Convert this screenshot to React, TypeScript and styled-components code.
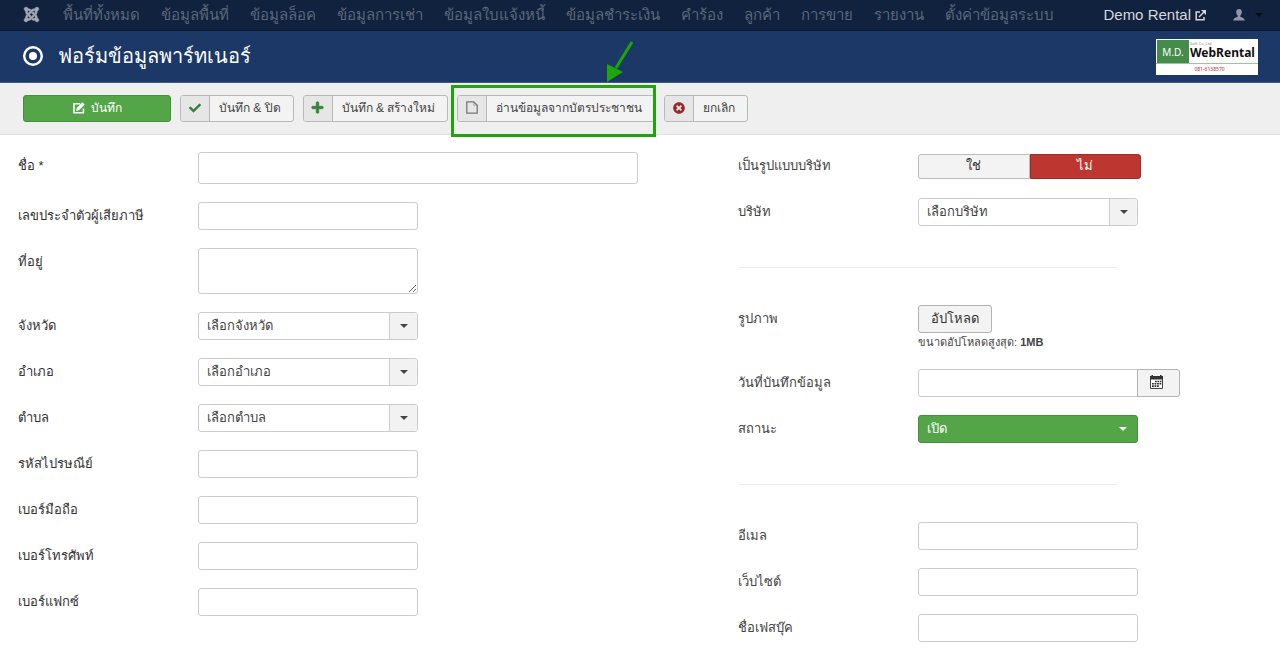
import React from "react";
import styled, { createGlobalStyle, css } from "styled-components";
import { FaJoomla, FaCheck, FaPlus, FaTimesCircle } from "react-icons/fa";

const fontStack = `"Liberation Sans", "Noto Sans", sans-serif`;

const GlobalStyle = createGlobalStyle`
  *, *::before, *::after { box-sizing: border-box; }
  body {
    margin: 0;
    background: #fff;
    color: #333;
    font: 13px/18px ${fontStack};
  }
  button, input, select, textarea { font: inherit; color: inherit; margin: 0; }
`;

const NavBar = styled.nav`
  display: flex;
  align-items: center;
  height: 31px;
  padding: 0 17px 0 23px;
  background: #10223e;
  border-bottom: 1px solid #0c1a2f;
  color: #d0d3d8;
  font-size: 15px;
  white-space: nowrap;
`;

const BrandLink = styled.a`
  display: flex;
  margin-right: 13px;
  padding-bottom: 2px;
  color: #a3a9b4;
`;

const MenuList = styled.ul`
  display: flex;
  flex: 1;
  gap: 1px;
  margin: 0;
  padding: 0;
  list-style: none;
`;

const MenuLink = styled.a`
  display: block;
  padding: 0 10px;
  color: #5c677b;
  font-size: 15px;
  line-height: 30px;
  text-decoration: none;
`;

const SiteLink = styled.a`
  display: flex;
  align-items: center;
  gap: 4px;
  margin-right: 27px;
  color: #d5d8dd;
  text-decoration: none;
`;

const UserButton = styled.button`
  display: flex;
  align-items: center;
  gap: 10px;
  padding: 0;
  border: 0;
  background: none;
  color: #9299a6;
`;

const Caret = styled.span`
  width: 0;
  height: 0;
  border: 4px solid transparent;
  border-top-color: currentColor;
  border-bottom: 0;
`;

const NavCaret = styled(Caret)`
  color: #060d18;
`;

const Header = styled.header`
  display: flex;
  align-items: center;
  justify-content: space-between;
  height: 52px;
  padding: 0 22px;
  background: #1c3867;
  border-bottom: 1px solid #44597f;
`;

const Title = styled.h1`
  display: flex;
  align-items: center;
  gap: 14px;
  margin: 0;
  padding-bottom: 2px;
  color: #fff;
  font-size: 20px;
  font-weight: normal;
  line-height: 36px;
`;

const Logo = styled.div`
  display: grid;
  grid-template-columns: 33px 1fr;
  grid-template-rows: 24px 1fr;
  width: 102px;
  height: 36px;
  background: #fff;
  font-family: "Noto Sans", sans-serif;
`;

const LogoMark = styled.div`
  margin: 1px 0 0 1px;
  background: #458b49;
  color: #fff;
  font-size: 10px;
  line-height: 24px;
  text-align: center;
`;

const LogoName = styled.div`
  display: flex;
  flex-direction: column;
  padding: 3px 0 0 1px;
  color: #111;
  font-size: 12px;
  font-weight: 700;
  line-height: 14px;
`;

const LogoOver = styled.span`
  color: #888;
  font-size: 4px;
  font-weight: 400;
  line-height: 4px;
`;

const LogoPhone = styled.div`
  grid-column: 1 / -1;
  padding-left: 5px;
  border-top: 1px solid #9cc49e;
  color: #b02a30;
  font-size: 5px;
  line-height: 11px;
  text-align: center;
`;

const Toolbar = styled.div`
  display: flex;
  align-items: flex-start;
  gap: 9px;
  height: 52px;
  padding: 12px 23px 0;
  background: #efefef;
  border-bottom: 1px solid #dfdfdf;
`;

const ToolButton = styled.button<{ $primary?: boolean }>`
  display: flex;
  align-items: stretch;
  height: 27px;
  padding: 0;
  border: 1px solid #b9b9b9;
  border-radius: 3px;
  background: #f3f3f3;
  color: #444;
  font-size: 12px;
  line-height: 25px;
  white-space: nowrap;
  ${(p) =>
    p.$primary &&
    css`
      justify-content: center;
      align-items: center;
      gap: 6px;
      width: 148px;
      border-color: #468f3e;
      background: #54a548;
      color: #fff;
    `}
`;

const ToolIcon = styled.span<{ $color: string }>`
  display: flex;
  align-items: center;
  justify-content: center;
  width: 29px;
  padding-bottom: 2px;
  border-right: 1px solid #b9b9b9;
  border-radius: 2px 0 0 2px;
  background: #e6e6e6;
  color: ${(p) => p.$color};
`;

const ToolLabel = styled.span`
  padding: 0 12px 0 9px;
`;

const Callout = styled.div`
  position: relative;
`;

const CalloutFrame = styled.span`
  position: absolute;
  inset: -10px -1px -15px -6px;
  border: 3px solid #1ea508;
  pointer-events: none;
`;

const CalloutArrow = styled.svg`
  position: absolute;
  left: 148px;
  top: -55px;
  pointer-events: none;
`;

const FormGrid = styled.form`
  display: grid;
  grid-template-columns: 702fr 524fr;
  gap: 18px;
  padding: 17px 18px 0;
`;

const Column = styled.div<{ $color: string }>`
  display: flex;
  flex-direction: column;
  gap: 18px;
  min-width: 0;
  color: ${(p) => p.$color};
`;

const Row = styled.div`
  display: grid;
  grid-template-columns: 180px minmax(0, 1fr);
  align-items: start;
  min-height: 28px;
`;

const Label = styled.label`
  padding-top: 5px;
`;

const fieldBox = css`
  display: block;
  border: 1px solid #ccc;
  border-radius: 3px;
  background: #fff;
  outline: 0;
`;

const TextInput = styled.input<{ $large?: boolean }>`
  ${fieldBox}
  width: ${(p) => (p.$large ? 440 : 220)}px;
  max-width: 100%;
  height: ${(p) => (p.$large ? 32 : 28)}px;
  padding: 4px 6px;
`;

const TextArea = styled.textarea`
  ${fieldBox}
  width: 220px;
  height: 46px;
  padding: 4px 6px;
  resize: vertical;
`;

const SelectBox = styled.div<{ $success?: boolean }>`
  position: relative;
  width: 220px;
  height: 28px;
  color: ${(p) => (p.$success ? "#fff" : "#444")};
`;

const Select = styled.select<{ $success?: boolean }>`
  ${fieldBox}
  width: 100%;
  height: 28px;
  padding: 0 30px 0 8px;
  appearance: none;
  ${(p) =>
    p.$success &&
    css`
      border-color: #468f3e;
      background: #54a548;
    `}
`;

const SelectArrow = styled.span<{ $plain?: boolean }>`
  position: absolute;
  top: 1px;
  right: 1px;
  bottom: 1px;
  display: flex;
  align-items: center;
  justify-content: center;
  width: 28px;
  border-left: ${(p) => (p.$plain ? "0" : "1px solid #ccc")};
  border-radius: 0 2px 2px 0;
  background: ${(p) => (p.$plain ? "none" : "#f2f2f2")};
  pointer-events: none;
`;

const Toggle = styled.div`
  display: flex;
  width: 223px;
  margin-top: 2px;
`;

const ToggleOption = styled.label<{ $tone: "neutral" | "danger" }>`
  flex: 1;
  height: 25px;
  border: 1px solid #bbb;
  border-radius: 3px 0 0 3px;
  background: #f3f3f3;
  color: #333;
  line-height: 21px;
  text-align: center;
  ${(p) =>
    p.$tone === "danger" &&
    css`
      border-color: #a12a24;
      border-radius: 0 3px 3px 0;
      background: #bd362f;
      color: #fff;
    `}
`;

const HiddenRadio = styled.input`
  position: absolute;
  opacity: 0;
  pointer-events: none;
`;

const Divider = styled.hr`
  width: 380px;
  max-width: 100%;
  margin: 23px 0 19px;
  border: 0;
  border-top: 1px solid #eee;
`;

const UploadButton = styled.button`
  display: block;
  height: 28px;
  padding: 0 12px;
  border: 1px solid #b3b3b3;
  border-radius: 3px;
  background: #f3f3f3;
  color: #333;
`;

const Hint = styled.div`
  font-size: 11px;
  line-height: 18px;
`;

const InputGroup = styled.div`
  display: flex;

  ${TextInput} {
    border-radius: 3px 0 0 3px;
  }
`;

const CalendarButton = styled.button`
  display: flex;
  align-items: center;
  justify-content: center;
  width: 43px;
  height: 28px;
  margin-left: -1px;
  padding: 0 4px 2px 0;
  border: 1px solid #b3b3b3;
  border-radius: 0 3px 3px 0;
  background: #f3f3f3;
`;

const ExternalIcon = () => (
  <svg width="11" height="11" viewBox="0 0 11 11" fill="none" stroke="currentColor" strokeWidth="1.500">
    <path d="M5 2H1.200v7.800H9V7" />
    <path d="M4 7l5.500-5.500" />
    <path d="M6 0h5v5z" fill="currentColor" stroke="none" />
  </svg>
);

const UserIcon = () => (
  <svg width="12" height="13" viewBox="0 0 12 13" fill="currentColor">
    <path d="M6 0C4.300 0 3.200 1.200 3.200 3c0 1.500.6 2.800 1.500 3.500v1.200C3 8.200.4 9 .2 11.500h11.600C11.600 9 9 8.200 7.300 7.700V6.500C8.200 5.800 8.800 4.500 8.800 3 8.800 1.200 7.700 0 6 0z" />
  </svg>
);

const TargetIcon = () => (
  <svg width="22" height="22" viewBox="0 0 22 22">
    <circle cx="11" cy="11" r="8.800" fill="none" stroke="#fff" strokeWidth="2.400" />
    <circle cx="11" cy="11" r="4" fill="#fff" />
  </svg>
);

const EditIcon = () => (
  <svg width="12" height="13" viewBox="0 0 12 13" fill="none" stroke="currentColor" strokeWidth="1.600">
    <path d="M7 1.800H1v9h9.400V6.500" />
    <path d="M3.200 8.900l.5-3L9.300.3l2.400 2.300L6.100 8.200z" fill="currentColor" stroke="none" />
  </svg>
);

const FileIcon = () => (
  <svg width="12" height="13" viewBox="0 0 12 13" fill="none" stroke="currentColor" strokeWidth="1.300">
    <path d="M.8.800h6.900l3.500 3.500v7.900H.8z" />
    <path d="M7.700.8v3.500h3.500" strokeWidth=".5" />
  </svg>
);

const CalendarIcon = () => (
  <svg width="13" height="14" viewBox="0 0 13 14">
    <path d="M.5 2h12v11.500H.5z" fill="#fff" stroke="#444" />
    <path d="M0 1h1.500V0H3v1h7V0h1.500v1H13v3.500H0z" fill="#333" />
    <path
      d="M5 6.500h6.500M2 8.800h9.500M2 11.100h7"
      stroke="#333"
      strokeWidth="1.600"
      strokeDasharray="1.800 .7"
    />
  </svg>
);

const menu = [
  "พื้นที่ทั้งหมด",
  "ข้อมูลพื้นที่",
  "ข้อมูลล็อค",
  "ข้อมูลการเช่า",
  "ข้อมูลใบแจ้งหนี้",
  "ข้อมูลชำระเงิน",
  "คำร้อง",
  "ลูกค้า",
  "การขาย",
  "รายงาน",
  "ตั้งค่าข้อมูลระบบ",
];

type FieldProps = { id: string; label: string };

const TextField = ({ id, label, large }: FieldProps & { large?: boolean }) => (
  <Row>
    <Label htmlFor={id}>{label}</Label>
    <TextInput id={id} type="text" $large={large} />
  </Row>
);

const SelectField = ({ id, label, option, success }: FieldProps & { option: string; success?: boolean }) => (
  <Row>
    <Label htmlFor={id}>{label}</Label>
    <SelectBox $success={success}>
      <Select id={id} $success={success}>
        <option>{option}</option>
      </Select>
      <SelectArrow $plain={success}>
        <Caret />
      </SelectArrow>
    </SelectBox>
  </Row>
);

const ToolItem = ({ icon, color, label }: { icon: React.ReactNode; color: string; label: string }) => (
  <ToolButton type="button">
    <ToolIcon $color={color}>{icon}</ToolIcon>
    <ToolLabel>{label}</ToolLabel>
  </ToolButton>
);

export default function App() {
  return (
    <>
      <GlobalStyle />
      <NavBar>
        <BrandLink href="#" aria-label="Joomla">
          <FaJoomla size={17} stroke="currentColor" strokeWidth={12} />
        </BrandLink>
        <MenuList>
          {menu.map((item) => (
            <li key={item}>
              <MenuLink href="#">{item}</MenuLink>
            </li>
          ))}
        </MenuList>
        <SiteLink href="#">
          Demo Rental <ExternalIcon />
        </SiteLink>
        <UserButton type="button" aria-label="User menu">
          <UserIcon />
          <NavCaret />
        </UserButton>
      </NavBar>
      <Header>
        <Title>
          <TargetIcon />
          ฟอร์มข้อมูลพาร์ทเนอร์
        </Title>
        <Logo>
          <LogoMark>M.D.</LogoMark>
          <LogoName>
            <LogoOver>Soft Co.,Ltd.</LogoOver>
            WebRental
          </LogoName>
          <LogoPhone>081-6138570</LogoPhone>
        </Logo>
      </Header>
      <Toolbar>
        <ToolButton type="button" $primary>
          <EditIcon />
          บันทึก
        </ToolButton>
        <ToolItem icon={<FaCheck size={12} />} color="#378137" label="บันทึก & ปิด" />
        <ToolItem icon={<FaPlus size={13} stroke="currentColor" strokeWidth={30} />} color="#378137" label="บันทึก & สร้างใหม่" />
        <Callout>
          <ToolItem icon={<FileIcon />} color="#777" label="อ่านข้อมูลจากบัตรประชาชน" />
          <CalloutFrame />
          <CalloutArrow width="30" height="44" viewBox="0 0 30 44">
            <path d="M27 2L11 28" stroke="#1ea508" strokeWidth="3" />
            <path d="M2 42V24l16 8z" fill="#1ea508" />
          </CalloutArrow>
        </Callout>
        <ToolItem icon={<FaTimesCircle size={12} />} color="#942a25" label="ยกเลิก" />
      </Toolbar>
      <FormGrid>
        <Column $color="#333">
          <TextField id="name" label="ชื่อ *" large />
          <TextField id="tax" label="เลขประจำตัวผู้เสียภาษี" />
          <Row>
            <Label htmlFor="address">ที่อยู่</Label>
            <TextArea id="address" />
          </Row>
          <SelectField id="province" label="จังหวัด" option="เลือกจังหวัด" />
          <SelectField id="district" label="อำเภอ" option="เลือกอำเภอ" />
          <SelectField id="subdistrict" label="ตำบล" option="เลือกตำบล" />
          <TextField id="postcode" label="รหัสไปรษณีย์" />
          <TextField id="mobile" label="เบอร์มือถือ" />
          <TextField id="phone" label="เบอร์โทรศัพท์" />
          <TextField id="fax" label="เบอร์แฟกซ์" />
        </Column>
        <Column $color="#444">
          <Row role="radiogroup" aria-labelledby="is-company">
            <Label as="span" id="is-company">
              เป็นรูปแบบบริษัท
            </Label>
            <Toggle>
              <ToggleOption $tone="neutral">
                <HiddenRadio type="radio" name="is-company" />
                ใช่
              </ToggleOption>
              <ToggleOption $tone="danger">
                <HiddenRadio type="radio" name="is-company" defaultChecked />
                ไม่
              </ToggleOption>
            </Toggle>
          </Row>
          <SelectField id="company" label="บริษัท" option="เลือกบริษัท" />
          <Divider />
          <Row>
            <Label as="span">รูปภาพ</Label>
            <div>
              <UploadButton type="button">อัปโหลด</UploadButton>
              <Hint>
                ขนาดอัปโหลดสูงสุด: <strong>1MB</strong>
              </Hint>
            </div>
          </Row>
          <Row>
            <Label htmlFor="created">วันที่บันทึกข้อมูล</Label>
            <InputGroup>
              <TextInput id="created" type="text" />
              <CalendarButton type="button" aria-label="Calendar">
                <CalendarIcon />
              </CalendarButton>
            </InputGroup>
          </Row>
          <SelectField id="status" label="สถานะ" option="เปิด" success />
          <Divider />
          <TextField id="email" label="อีเมล" />
          <TextField id="website" label="เว็บไซต์" />
          <TextField id="facebook" label="ชื่อเฟสบุ๊ค" />
        </Column>
      </FormGrid>
    </>
  );
}
